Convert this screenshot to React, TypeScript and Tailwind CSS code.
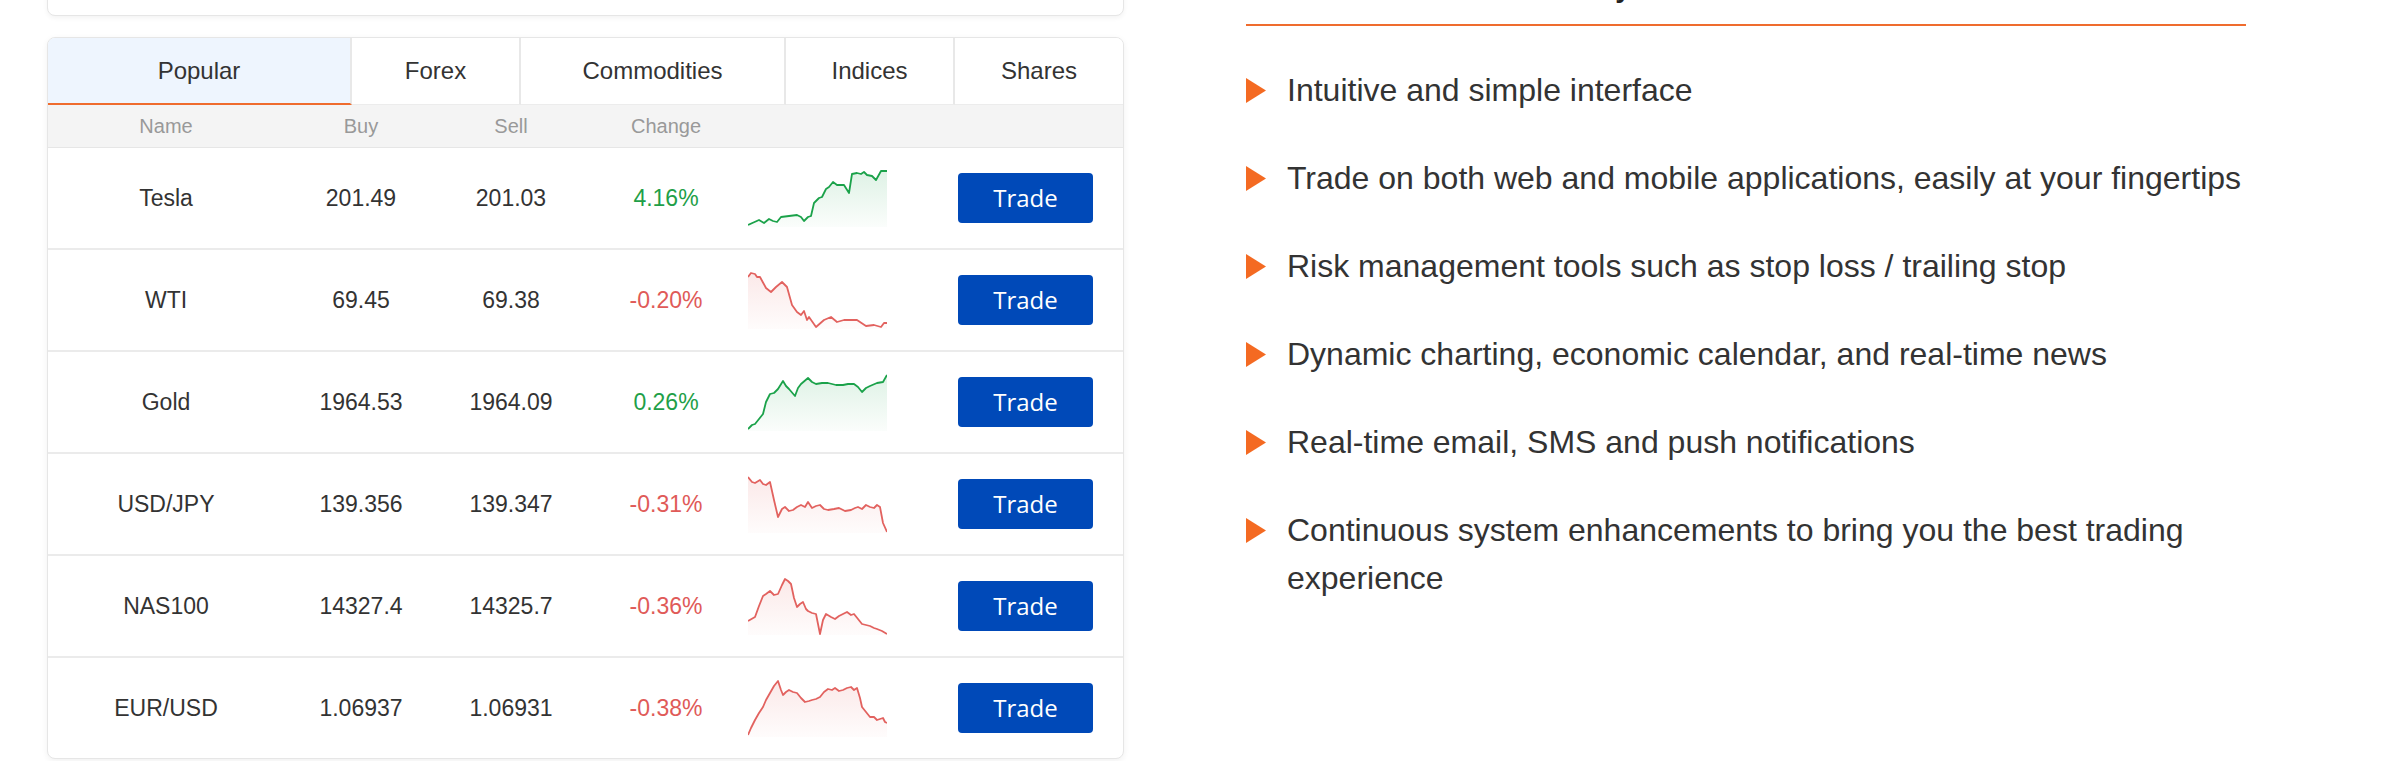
import React from 'react';

type Row = {
    name: string;
    buy: string;
    sell: string;
    change: string;
    up: boolean;
    points: [number, number][];
};

const tabs = [
    { label: 'Popular', w: 'w-[304px]', active: true },
    { label: 'Forex', w: 'w-[169px]' },
    { label: 'Commodities', w: 'w-[265px]' },
    { label: 'Indices', w: 'w-[169px]' },
    { label: 'Shares', w: 'flex-1' },
];

const rows: Row[] = [
    {
        name: 'Tesla', buy: '201.49', sell: '201.03', change: '4.16%', up: true,
        points: [[0, 55], [11, 50], [16, 53], [21, 49], [25, 51], [29, 52], [33, 47], [41, 46], [49, 45], [53, 47], [56, 51], [60, 47], [63, 46], [66, 33], [71, 28], [74, 27], [78, 19], [81, 17], [85, 12], [89, 15], [93, 15], [96, 15], [101, 23], [104, 4], [109, 3], [113, 4], [116, 2], [119, 5], [124, 6], [128, 10], [133, 1], [139, 1]],
    },
    {
        name: 'WTI', buy: '69.45', sell: '69.38', change: '-0.20%', up: false,
        points: [[0, 5], [3, 1], [7, 2], [9, 5], [12, 5], [18, 16], [23, 20], [28, 15], [34, 10], [39, 15], [44, 33], [49, 40], [53, 43], [56, 39], [59, 48], [61, 45], [68, 55], [76, 48], [83, 45], [89, 50], [96, 48], [109, 48], [118, 54], [126, 53], [133, 55], [136, 51], [139, 51]],
    },
    {
        name: 'Gold', buy: '1964.53', sell: '1964.09', change: '0.26%', up: true,
        points: [[0, 55], [4, 51], [7, 50], [11, 45], [15, 40], [18, 28], [22, 20], [26, 19], [30, 15], [35, 7], [38, 12], [41, 15], [47, 22], [50, 14], [53, 10], [60, 4], [64, 8], [68, 10], [74, 9], [80, 9], [88, 11], [95, 11], [100, 10], [106, 10], [110, 13], [114, 18], [118, 14], [122, 12], [129, 9], [135, 8], [139, 1]],
    },
    {
        name: 'USD/JPY', buy: '139.356', sell: '139.347', change: '-0.31%', up: false,
        points: [[0, 1], [4, 6], [7, 7], [12, 4], [15, 8], [18, 9], [22, 6], [26, 24], [30, 41], [34, 33], [37, 31], [41, 35], [45, 34], [49, 31], [53, 29], [57, 31], [60, 26], [64, 32], [68, 30], [72, 29], [76, 33], [80, 34], [86, 33], [91, 32], [97, 35], [103, 34], [107, 32], [110, 31], [114, 33], [118, 29], [122, 31], [126, 32], [129, 29], [132, 31], [135, 47], [139, 56]],
    },
    {
        name: 'NAS100', buy: '14327.4', sell: '14325.7', change: '-0.36%', up: false,
        points: [[0, 43], [7, 39], [11, 28], [15, 18], [18, 16], [22, 13], [26, 17], [30, 16], [34, 7], [37, 1], [40, 3], [43, 6], [46, 20], [49, 29], [52, 26], [55, 24], [58, 31], [60, 33], [64, 35], [68, 36], [72, 56], [75, 42], [78, 36], [83, 39], [87, 41], [91, 38], [95, 36], [99, 34], [103, 37], [106, 36], [110, 41], [114, 46], [118, 47], [122, 48], [126, 50], [129, 51], [134, 53], [139, 56]],
    },
    {
        name: 'EUR/USD', buy: '1.06937', sell: '1.06931', change: '-0.38%', up: false,
        points: [[0, 55], [3, 48], [7, 40], [11, 33], [15, 27], [18, 20], [22, 13], [26, 6], [30, 1], [33, 10], [35, 15], [38, 12], [41, 10], [45, 12], [49, 13], [53, 18], [57, 22], [61, 21], [64, 20], [68, 19], [72, 17], [76, 12], [80, 9], [84, 10], [87, 8], [91, 11], [95, 10], [99, 8], [103, 7], [106, 10], [109, 8], [112, 18], [114, 27], [118, 32], [122, 37], [126, 37], [129, 40], [132, 39], [135, 38], [137, 42], [139, 43]],
    },
];

const features = [
    'Intuitive and simple interface',
    'Trade on both web and mobile applications, easily at your fingertips',
    'Risk management tools such as stop loss / trailing stop',
    'Dynamic charting, economic calendar, and real-time news',
    'Real-time email, SMS and push notifications',
    'Continuous system enhancements to bring you the best trading experience',
];

function Sparkline({ points, up, id }: { points: [number, number][]; up: boolean; id: string }) {
    const color = up ? '#1ba24a' : '#e2625f';
    const line = points.map(([x, y]) => `${x},${y}`).join(' ');
    const area = `M0,57 L${points.map(([x, y]) => `${x},${y}`).join(' L')} L139,57 Z`;

    return (
        <svg width="139" height="57" viewBox="0 0 139 57" className="block">
            <defs>
                <linearGradient id={id} x1="0" y1="0" x2="0" y2="1">
                    <stop offset="0%" stopColor={color} stopOpacity="0.14" />
                    <stop offset="100%" stopColor={color} stopOpacity="0.02" />
                </linearGradient>
            </defs>
            <path d={area} fill={`url(#${id})`} />
            <polyline points={line} fill="none" stroke={color} strokeWidth="1.8" strokeLinejoin="round" />
        </svg>
    );
}

export default function App() {
    return (
        <div className="w-[2397px] h-[761px] overflow-hidden bg-white font-['Liberation_Sans',Arial,sans-serif] text-[#333333]">
            <div className="flex items-start pl-[47px] -mt-[40px]">

                {/* Left column: market table */}
                <div className="w-[1077px] flex flex-col gap-[21px]">
                    <div className="h-[56px] bg-white border border-[#e6e6e6] rounded-[8px] shadow-[0_2px_5px_rgba(0,0,0,0.05)]"></div>

                    <div className="bg-white border border-[#e6e6e6] rounded-[8px] overflow-hidden shadow-[0_2px_6px_rgba(0,0,0,0.06)]">
                        {/* Tabs */}
                        <div className="flex h-[67px]">
                            {tabs.map((t, i) => (
                                <div
                                    key={t.label}
                                    className={`${t.w} flex items-center justify-center text-[24px] ${i < tabs.length - 1 ? 'border-r-2 border-[#e8e8e8]' : ''} ${t.active ? 'bg-[#eef5fe] border-b-2 border-b-[#ef6c2e]' : 'bg-white border-b border-b-[#ececec]'}`}
                                >
                                    {t.label}
                                </div>
                            ))}
                        </div>

                        {/* Header */}
                        <div className="grid grid-cols-[236px_154px_146px_164px_139px_1fr] h-[43px] items-center bg-[#f4f4f4] border-b border-[#e6e6e6] text-[20px] text-[#999999]">
                            <div className="text-center">Name</div>
                            <div className="text-center">Buy</div>
                            <div className="text-center">Sell</div>
                            <div className="text-center">Change</div>
                            <div></div>
                            <div></div>
                        </div>

                        {/* Rows */}
                        {rows.map((r, i) => (
                            <div
                                key={r.name}
                                className={`grid grid-cols-[236px_154px_146px_164px_139px_1fr] h-[100px] items-center text-[23px] ${i < rows.length - 1 ? 'border-b-2 border-[#ebebeb] box-content' : ''}`}
                            >
                                <div className="text-center">{r.name}</div>
                                <div className="text-center">{r.buy}</div>
                                <div className="text-center">{r.sell}</div>
                                <div className={`text-center ${r.up ? 'text-[#1f9f48]' : 'text-[#e05a58]'}`}>{r.change}</div>
                                <div>
                                    <Sparkline points={r.points} up={r.up} id={`spark-${i}`} />
                                </div>
                                <div className="flex justify-end pr-[30px]">
                                    <button
                                        type="button"
                                        className="w-[135px] h-[50px] rounded-[4px] bg-[#0049b8] text-white text-[24px] font-['Open_Sans',sans-serif]"
                                    >
                                        Trade
                                    </button>
                                </div>
                            </div>
                        ))}
                    </div>
                </div>

                {/* Right column: features */}
                <div className="ml-[122px] w-[1000px] flex flex-col">
                    <h2 className="mt-[10px] h-[36px] leading-[36px] text-[28px] font-bold text-center text-[#222222]">
                        Why Choose Our Platform
                    </h2>
                    <div className="mt-[18px] h-[2px] bg-[#ef6c2e]"></div>

                    <ul className="mt-[40px] flex flex-col gap-[40px]">
                        {features.map((f) => (
                            <li key={f} className="flex items-start">
                                <div className="h-[48px] flex items-center shrink-0">
                                    <svg width="20" height="25" viewBox="0 0 20 25">
                                        <polygon points="0,0 20,12.5 0,25" fill="#f46a22" />
                                    </svg>
                                </div>
                                <p className="ml-[21px] w-[959px] text-[32px] leading-[48px] text-[#333333]">{f}</p>
                            </li>
                        ))}
                    </ul>
                </div>
            </div>
        </div>
    );
}
